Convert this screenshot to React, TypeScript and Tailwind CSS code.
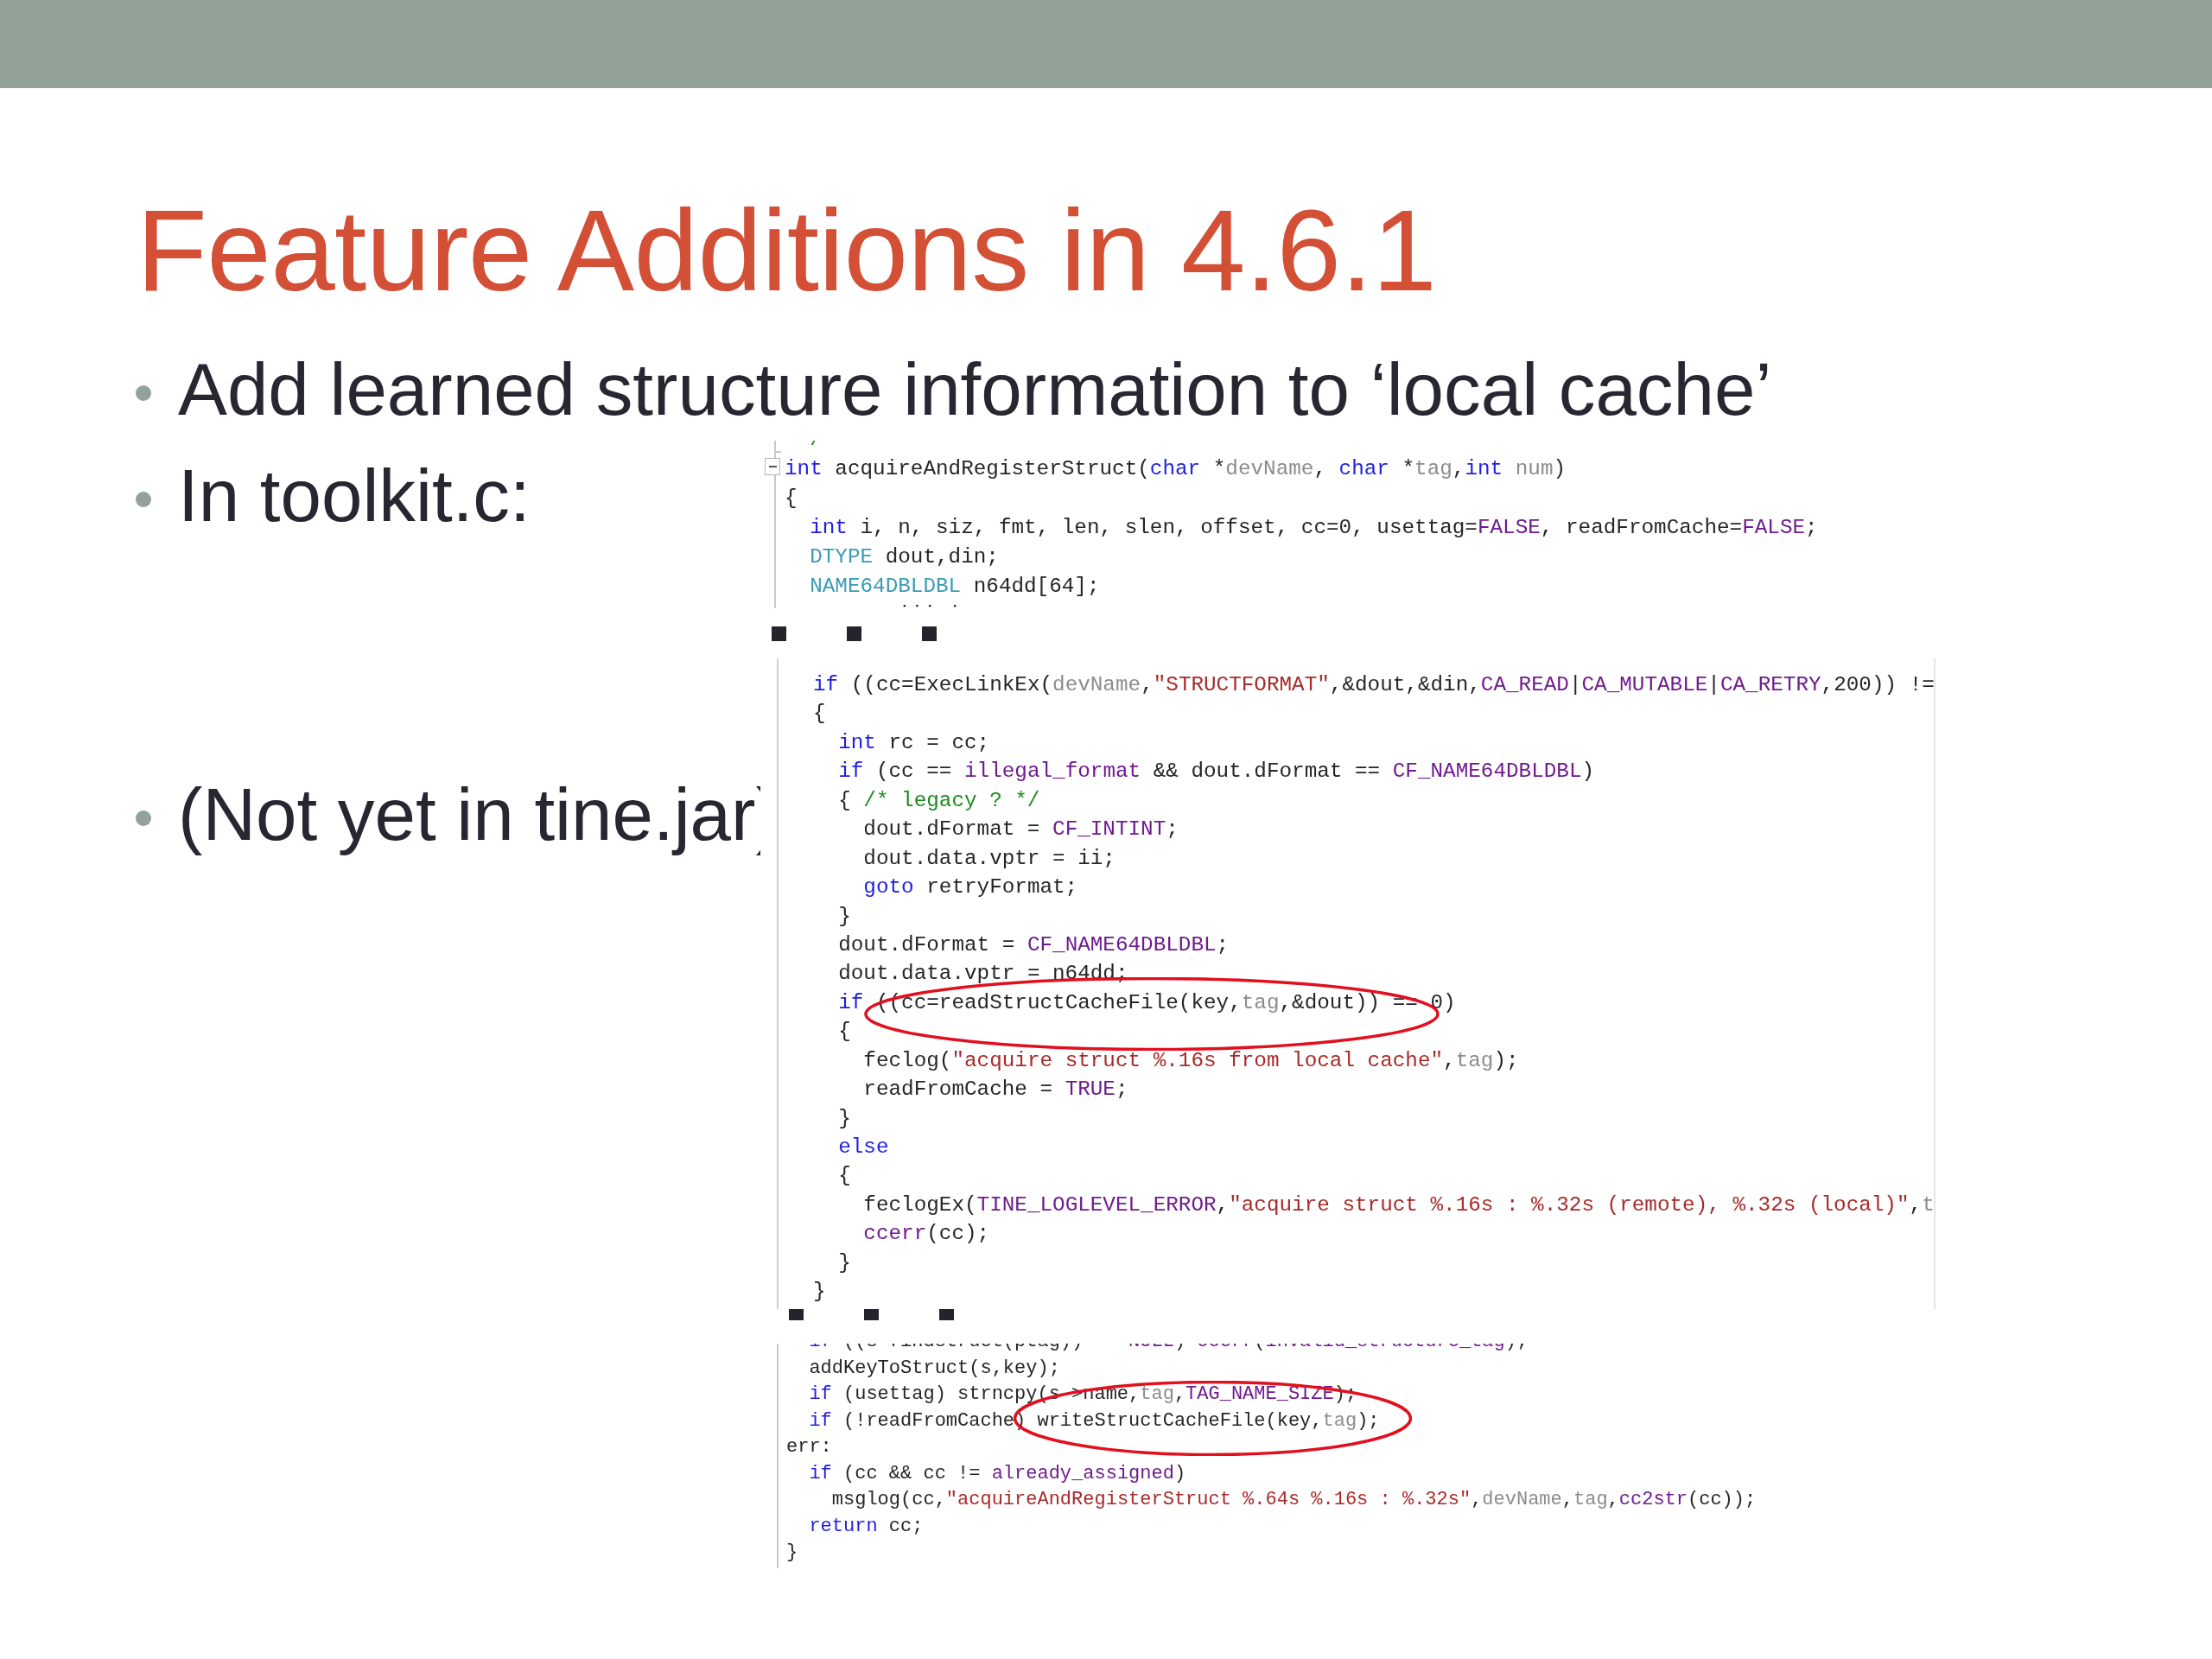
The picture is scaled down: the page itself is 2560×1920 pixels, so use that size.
import type { ReactNode } from "react";

const K = ({ children }: { children: ReactNode }) => <span className="text-[#1f1fe0]">{children}</span>;
const M = ({ children }: { children: ReactNode }) => <span className="text-[#6f1a8f]">{children}</span>;
const S = ({ children }: { children: ReactNode }) => <span className="text-[#a82a2a]">{children}</span>;
const P = ({ children }: { children: ReactNode }) => <span className="text-[#8c8c8c]">{children}</span>;
const T = ({ children }: { children: ReactNode }) => <span className="text-[#3a9bb5]">{children}</span>;
const G = ({ children }: { children: ReactNode }) => <span className="text-[#1c8c1c]">{children}</span>;

const Bullet = ({ children, className }: { children: ReactNode; className?: string }) => (
  <div className={`flex items-start whitespace-nowrap text-[85.3px] leading-[123px] text-[#272732] ${className ?? ""}`}>
    <span className="mt-[57px] mr-[31px] h-[18px] w-[18px] shrink-0 rounded-full bg-[#93a299]"></span>
    {children}
  </div>
);

const Dots = ({ className }: { className: string }) => (
  <div className={`flex gap-[70px] ${className}`}>
    <span className="h-full w-[17px] bg-[#24242c]"></span>
    <span className="h-full w-[17px] bg-[#24242c]"></span>
    <span className="h-full w-[17px] bg-[#24242c]"></span>
  </div>
);

export default function App() {
  return (
    <div className="h-[1920px] w-[2560px] overflow-hidden bg-white font-['Liberation_Sans',Arial,sans-serif]">
      <div className="h-[102px] bg-[#93a299]"></div>

      <h1 className="mt-[108px] ml-[158px] h-[160px] whitespace-nowrap text-[134px] leading-[160px] font-normal tracking-[-0.6px] text-[#d34f35]">
        Feature Additions in 4.6.1
      </h1>

      <Bullet className="mt-[19px] ml-[157px] h-[121px]">Add learned structure information to ‘local cache’</Bullet>

      <div className="flex">
        <div className="w-[880px] shrink-0 overflow-hidden pt-[2px] pl-[157px]">
          <Bullet>In toolkit.c:</Bullet>
          <Bullet className="mt-[246px]">(Not yet in tine.jar)</Bullet>
        </div>

        <div className="flex flex-col font-['Liberation_Mono',monospace] text-[#26262a]">
          {/* first snippet */}
          <div className="relative ml-[16px] h-[194px] w-[1240px] border-l-2 border-[#c9c9c9]">
            <span className="absolute top-[12px] left-0 h-[2px] w-[6px] bg-[#c9c9c9]"></span>
            <div className="absolute top-[20px] left-[-13px] flex h-[20px] w-[18px] items-center justify-center border border-[#b5b5b5] bg-white">
              <span className="h-[2px] w-[9px] bg-[#555]"></span>
            </div>
            <div className="h-full overflow-hidden pl-[10px] blur-[0.6px]">
              <pre className="-mt-[18px] font-['Liberation_Mono',monospace] text-[24.3px] leading-[33.9px]">
                {"  "}<G>/</G>{"\n"}
                <K>int</K> acquireAndRegisterStruct(<K>char</K> *<P>devName</P>, <K>char</K> *<P>tag</P>,<K>int</K> <P>num</P>){"\n"}
                {"{\n"}
                {"  "}<K>int</K> i, n, siz, fmt, len, slen, offset, cc=0, usettag=<M>FALSE</M>, readFromCache=<M>FALSE</M>;{"\n"}
                {"  "}<T>DTYPE</T> dout,din;{"\n"}
                {"  "}<T>NAME64DBLDBL</T> n64dd[64];{"\n"}
                {"         iii i"}
              </pre>
            </div>
          </div>

          <Dots className="mt-[21px] ml-[13px] h-[17px]" />

          {/* second snippet */}
          <div className="relative mt-[20px] ml-[19px] h-[753px] w-[1341px] border-x-2 border-l-[#d0d0d0] border-r-[#e4e4e4]">
            <div className="h-full overflow-hidden pt-[14px] pl-[40px] blur-[0.6px]">
              <pre className="font-['Liberation_Mono',monospace] text-[24.3px] leading-[33.43px]">
                <K>if</K> ((cc=ExecLinkEx(<P>devName</P>,<S>"STRUCTFORMAT"</S>,&amp;dout,&amp;din,<M>CA_READ</M>|<M>CA_MUTABLE</M>|<M>CA_RETRY</M>,200)) != 0){"\n"}
                {"{\n"}
                {"  "}<K>int</K> rc = cc;{"\n"}
                {"  "}<K>if</K> (cc == <M>illegal_format</M> &amp;&amp; dout.dFormat == <M>CF_NAME64DBLDBL</M>){"\n"}
                {"  { "}<G>/* legacy ? */</G>{"\n"}
                {"    "}dout.dFormat = <M>CF_INTINT</M>;{"\n"}
                {"    "}dout.data.vptr = ii;{"\n"}
                {"    "}<K>goto</K> retryFormat;{"\n"}
                {"  }\n"}
                {"  "}dout.dFormat = <M>CF_NAME64DBLDBL</M>;{"\n"}
                {"  "}dout.data.vptr = n64dd;{"\n"}
                {"  "}<K>if</K> ((cc=readStructCacheFile(key,<P>tag</P>,&amp;dout)) == 0){"\n"}
                {"  {\n"}
                {"    "}feclog(<S>"acquire struct %.16s from local cache"</S>,<P>tag</P>);{"\n"}
                {"    "}readFromCache = <M>TRUE</M>;{"\n"}
                {"  }\n"}
                {"  "}<K>else</K>{"\n"}
                {"  {\n"}
                {"    "}feclogEx(<M>TINE_LOGLEVEL_ERROR</M>,<S>"acquire struct %.16s : %.32s (remote), %.32s (local)"</S>,<P>tag</P>);{"\n"}
                {"    "}<M>ccerr</M>(cc);{"\n"}
                {"  }\n"}
                {"}"}
              </pre>
            </div>
            <svg className="absolute top-[369px] left-[99px] h-[85px] w-[666px] blur-[0.4px]" viewBox="0 0 666 85" fill="none">
              <ellipse cx="333" cy="42.5" rx="331" ry="41" stroke="#e2101e" strokeWidth="3.5" />
            </svg>
          </div>

          <Dots className="ml-[33px] h-[13px]" />

          {/* third snippet */}
          <div className="relative mt-[27px] ml-[19px] h-[260px] w-[1240px] border-l-2 border-[#c9c9c9]">
            <div className="h-full overflow-hidden pl-[9px] blur-[0.6px]">
              <pre className="-mt-[17px] font-['Liberation_Mono',monospace] text-[22px] leading-[30.5px]">
                {"  "}<K>if</K> ((s=findstruct(ptag)) == <M>NULL</M>) <M>ccerr</M>(<M>invalid_structure_tag</M>);{"\n"}
                {"  "}addKeyToStruct(s,key);{"\n"}
                {"  "}<K>if</K> (usettag) strncpy(s-&gt;name,<P>tag</P>,<M>TAG_NAME_SIZE</M>);{"\n"}
                {"  "}<K>if</K> (!readFromCache) writeStructCacheFile(key,<P>tag</P>);{"\n"}
                {"err:\n"}
                {"  "}<K>if</K> (cc &amp;&amp; cc != <M>already_assigned</M>){"\n"}
                {"    "}msglog(cc,<S>"acquireAndRegisterStruct %.64s %.16s : %.32s"</S>,<P>devName</P>,<P>tag</P>,<M>cc2str</M>(cc));{"\n"}
                {"  "}<K>return</K> cc;{"\n"}
                {"}"}
              </pre>
            </div>
            <svg className="absolute top-[43px] left-[272px] h-[87px] w-[461px] blur-[0.4px]" viewBox="0 0 461 87" fill="none">
              <ellipse cx="230.5" cy="43.5" rx="229" ry="42" stroke="#e2101e" strokeWidth="3.5" />
            </svg>
          </div>
        </div>
      </div>
    </div>
  );
}
